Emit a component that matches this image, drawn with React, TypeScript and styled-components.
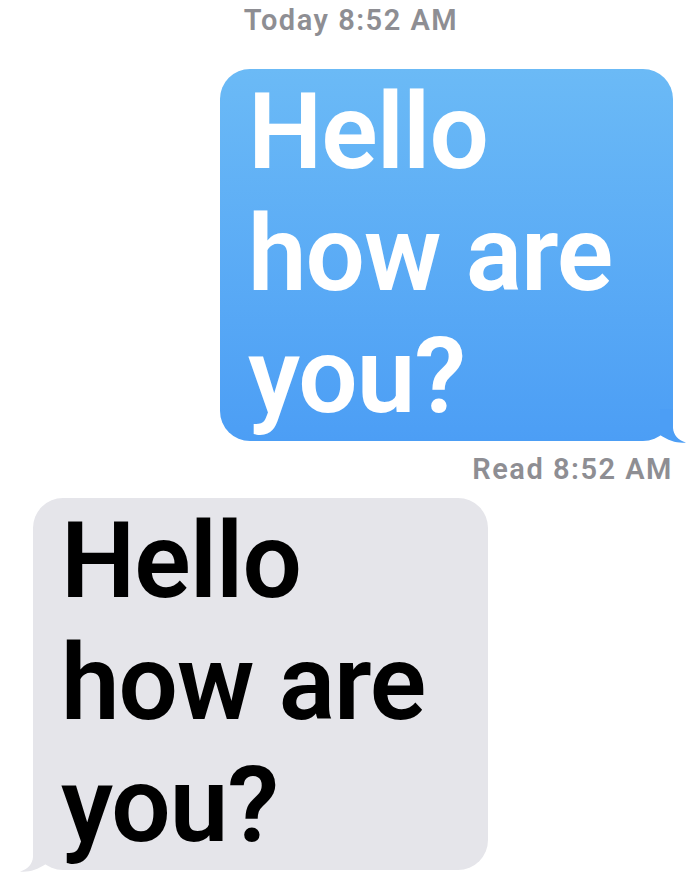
import React from "react";
import styled, { createGlobalStyle, css } from "styled-components";

const GlobalStyle = createGlobalStyle`
  html, body { margin: 0; padding: 0; background: #ffffff; }
  body { font-family: Roboto, "Liberation Sans", Arial, sans-serif; }
`;

const BLUE_TOP = "#6bbaf6";
const BLUE_BOTTOM = "#4c9ef5";
const GRAY = "#e5e5ea";

const Thread = styled.div`
  width: 698px;
  height: 880px;
  box-sizing: border-box;
  display: flex;
  flex-direction: column;
  padding-top: 4px;
  overflow: hidden;
`;

const Stamp = styled.div<{ $align: "center" | "right" }>`
  font-size: 29px;
  line-height: 32px;
  font-weight: 600;
  letter-spacing: 1.5px;
  color: #8e8e93;
  ${(p) =>
    p.$align === "center"
      ? css`
          align-self: center;
          margin-left: 4px;
        `
      : css`
          align-self: flex-end;
          margin: 12px 25px 0 0;
        `}
`;

const Bubble = styled.div<{ $mine: boolean }>`
  position: relative;
  box-sizing: border-box;
  border-radius: 30px;
  font-size: 105px;
  line-height: 122px;
  font-weight: 600;
  letter-spacing: -1px;
  padding: 3px 0 3px 28px;
  ${(p) =>
    p.$mine
      ? css`
          align-self: flex-end;
          margin: 33px 25px 0 0;
          width: 453px;
          color: #ffffff;
          background: linear-gradient(to bottom, ${BLUE_TOP}, ${BLUE_BOTTOM});
        `
      : css`
          align-self: flex-start;
          margin: 13px 0 0 33px;
          width: 455px;
          color: #000000;
          background: ${GRAY};
        `}
`;

const Tail = styled.svg<{ $mine: boolean }>`
  position: absolute;
  bottom: -2px;
  width: 48px;
  height: 40px;
  overflow: visible;
  ${(p) =>
    p.$mine
      ? css`
          right: -16px;
        `
      : css`
          left: -16px;
          transform: scaleX(-1);
        `}
`;

function BubbleTail({ mine }: { mine: boolean }) {
  // coordinates: bubble right edge at x=32, bubble bottom at y=38
  return (
    <Tail $mine={mine} viewBox="0 0 48 40">
      <path
        d="M32 6 L32 25 C32.5 32 37 37 45 39.5 C37 40.5 28 38 19 32 L19 6 Z"
        fill={mine ? BLUE_BOTTOM : GRAY}
      />
    </Tail>
  );
}

export default function App() {
  return (
    <>
      <GlobalStyle />
      <Thread>
        <Stamp $align="center">Today 8:52 AM</Stamp>
        <Bubble $mine>
          Hello
          <br />
          how are
          <br />
          you?
          <BubbleTail mine />
        </Bubble>
        <Stamp $align="right">Read 8:52 AM</Stamp>
        <Bubble $mine={false}>
          Hello
          <br />
          how are
          <br />
          you?
          <BubbleTail mine={false} />
        </Bubble>
      </Thread>
    </>
  );
}
